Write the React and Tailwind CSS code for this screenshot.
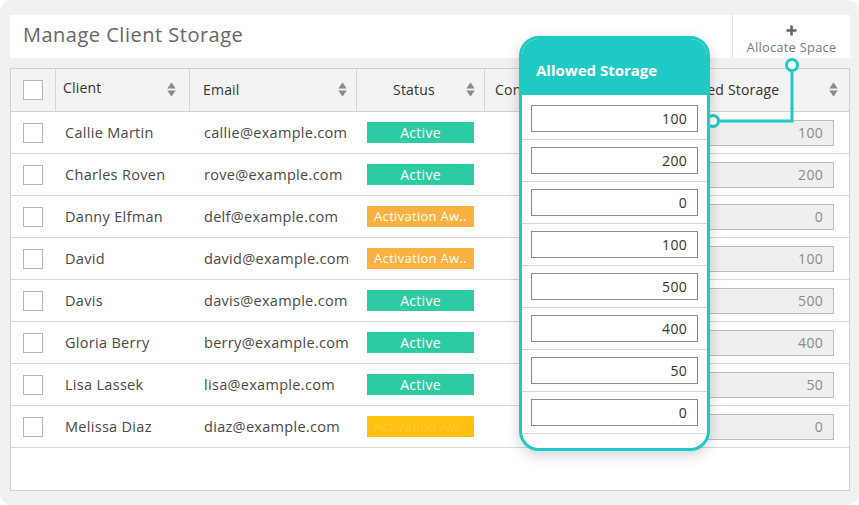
import React from "react";

const rows = [
  { name: "Callie Martin", email: "callie@example.com", status: "active", allowed: 100, alloc: 100 },
  { name: "Charles Roven", email: "rove@example.com", status: "active", allowed: 200, alloc: 200 },
  { name: "Danny Elfman", email: "delf@example.com", status: "await", allowed: 0, alloc: 0 },
  { name: "David", email: "david@example.com", status: "await", allowed: 100, alloc: 100 },
  { name: "Davis", email: "davis@example.com", status: "active", allowed: 500, alloc: 500 },
  { name: "Gloria Berry", email: "berry@example.com", status: "active", allowed: 400, alloc: 400 },
  { name: "Lisa Lassek", email: "lisa@example.com", status: "active", allowed: 50, alloc: 50 },
  { name: "Melissa Diaz", email: "diaz@example.com", status: "pending", allowed: 0, alloc: 0 },
];

function SortIcon() {
  return (
    <svg width="9" height="15" viewBox="0 0 9 15" className="shrink-0">
      <path d="M4.5 0.5 L8.7 6.5 H0.3 Z" fill="#8a8a8a" />
      <path d="M4.5 14.5 L8.7 8.5 H0.3 Z" fill="#8a8a8a" />
    </svg>
  );
}

function Checkbox() {
  return <div className="w-[20px] h-[20px] border border-[#b5b5b5] bg-white" />;
}

function Badge({ status }) {
  if (status === "active")
    return (
      <div className="w-[107px] h-[21px] bg-[#2dcba2] text-white text-[14px] leading-[21px] text-center tracking-[0.3px]">
        Active
      </div>
    );
  if (status === "await")
    return (
      <div className="w-[107px] h-[21px] bg-[#fbb13f] text-white text-[13px] leading-[21px] text-center whitespace-nowrap overflow-hidden">
        Activation Aw..
      </div>
    );
  return (
    <div className="w-[107px] h-[21px] bg-[#ffc00f] text-[#ffca35] text-[13px] leading-[21px] text-center whitespace-nowrap overflow-hidden">
      Activation Aw..
    </div>
  );
}

export default function App() {
  return (
    <div
      className="w-[859px] h-[505px] bg-white overflow-hidden"
      style={{ fontFamily: '"Open Sans", "Liberation Sans", sans-serif' }}
    >
      <div className="relative w-full h-full rounded-[12px] bg-[#f1f1f1] pl-[10px] pr-[9px] pt-[15px]">
        {/* Header bar */}
        <div className="flex h-[43px] bg-white">
          <div className="flex-1 flex items-center pl-[13px] pb-[4px] text-[20px] text-[#666] tracking-[0.5px]">
            Manage Client Storage
          </div>
          <div className="w-[118px] border-l border-[#e2e2e2] flex flex-col items-center pt-[10px]">
            <svg width="11" height="11" viewBox="0 0 11 11">
              <path d="M5.5 0.5 V10.5 M0.5 5.5 H10.5" stroke="#666" strokeWidth="2.6" />
            </svg>
            <div className="text-[13px] leading-[16px] text-[#7a7a7a] mt-[3px] tracking-[0.2px]">Allocate Space</div>
          </div>
        </div>

        {/* Table */}
        <div className="mt-[10px] h-[423px] bg-white border border-[#cfcfcf] text-[#484848]">
          <div className="flex h-[43px] bg-[#f3f3f3] border-b border-[#d0d0d0] text-[14px] text-[#333] tracking-[0.2px]">
            <div className="w-[45px] border-r border-[#d6d6d6] flex items-center pl-[12px]">
              <Checkbox />
            </div>
            <div className="w-[134px] border-r border-[#d6d6d6] flex items-start justify-between pl-[7px] pr-[13px] pt-[8px]">
              <span>Client</span>
              <span className="pt-[5px]"><SortIcon /></span>
            </div>
            <div className="w-[167px] border-r border-[#d6d6d6] flex items-center justify-between pl-[13px] pr-[9px] pb-[2px]">
              <span>Email</span>
              <SortIcon />
            </div>
            <div className="w-[128px] border-r border-[#d6d6d6] flex items-center justify-between pl-[36px] pr-[9px] pb-[2px]">
              <span>Status</span>
              <SortIcon />
            </div>
            <div className="w-[172px] border-r border-[#d6d6d6] flex items-center pl-[10px] pb-[2px]">
              <span className="whitespace-nowrap">Consumed Storage</span>
            </div>
            <div className="flex-1 flex items-center justify-between pl-[5px] pr-[11px] pb-[2px]">
              <span className="whitespace-nowrap">Allocated Storage</span>
              <SortIcon />
            </div>
          </div>
          {rows.map((r, i) => (
            <div key={i} className="flex h-[42px] border-b border-[#d6d6d6] items-center text-[14.5px] tracking-[0.3px]">
              <div className="w-[45px] pl-[12px]">
                <Checkbox />
              </div>
              <div className="w-[134px] pl-[9px]">{r.name}</div>
              <div className="w-[167px] pl-[14px] whitespace-nowrap">{r.email}</div>
              <div className="w-[128px] pl-[10px]">
                <Badge status={r.status} />
              </div>
              <div className="w-[172px]" />
              <div className="flex-1 flex justify-end pr-[15px]">
                <div className="w-[150px] h-[26px] bg-[#efefef] border border-[#bdbdbd] text-right pr-[10px] text-[14px] leading-[24px] text-[#8a8a8a]">
                  {r.alloc}
                </div>
              </div>
            </div>
          ))}
        </div>

        {/* Connector */}
        <svg className="absolute left-[700px] top-[55px]" width="110" height="80" viewBox="0 0 110 80">
          <path d="M18 66 H92 V15" fill="none" stroke="#1fcac4" strokeWidth="3" />
          <circle cx="92" cy="10" r="5.5" fill="white" stroke="#1fcac4" strokeWidth="3" />
          <circle cx="13" cy="66" r="5.5" fill="white" stroke="#1fcac4" strokeWidth="3" />
        </svg>

        {/* Popup card */}
        <div className="absolute left-[519px] top-[36px] w-[191px] h-[415px] rounded-[20px] border-[3px] border-[#1fcac4] bg-white overflow-hidden shadow-[0_4px_14px_rgba(0,0,0,0.18)]">
          <div className="h-[56px] bg-[#1fcac4] flex items-center pl-[14px] pt-[6px] text-white font-bold text-[15px]">
            Allowed Storage
          </div>
          <div className="pt-[3px]">
            {rows.map((r, i) => (
              <div key={i} className="h-[42px] border-b border-[#d4d4d4] flex items-center px-[9px]">
                <div className="w-full h-[27px] border border-[#8a8a8a] text-right pr-[10px] text-[14px] leading-[25px] text-[#333] tracking-[0.3px]">
                  {r.allowed}
                </div>
              </div>
            ))}
          </div>
        </div>
      </div>
    </div>
  );
}
